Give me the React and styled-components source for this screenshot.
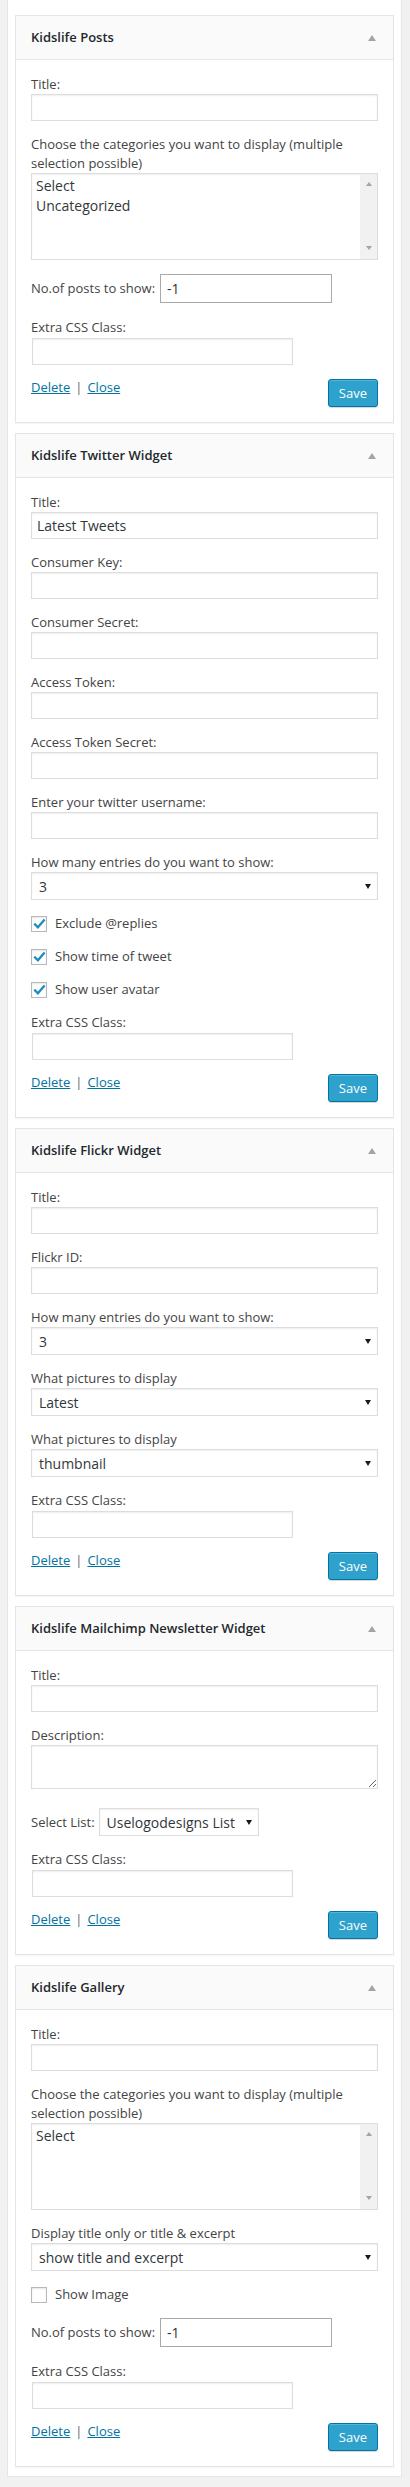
import React from "react";
import styled, { createGlobalStyle } from "styled-components";

const GlobalStyle = createGlobalStyle`
  html, body { margin: 0; padding: 0; background: #f1f1f1; }
  body {
    font-family: "Open Sans", "Liberation Sans", sans-serif;
    font-size: 13px;
    color: #444;
    line-height: 1.4;
  }
  *, *::before, *::after { box-sizing: border-box; }
`;

const Panel = styled.div`
  margin: 0 8px 9px 7px;
  background: #fff;
  border: 1px solid #e5e5e5;
  border-top: none;
  padding: 15px 7px 9px;
  display: flex;
  flex-direction: column;
  gap: 10px;
`;

const Widget = styled.section`
  background: #fff;
  border: 1px solid #e5e5e5;
  box-shadow: 0 1px 1px rgba(0, 0, 0, 0.04);
`;

const WidgetTop = styled.header`
  height: 44px;
  background: #fafafa;
  border-bottom: 1px solid #e5e5e5;
  display: flex;
  align-items: center;
  justify-content: space-between;
  padding: 0 12px 0 15px;
`;

const WidgetTitle = styled.h3`
  margin: 0;
  font-size: 13px;
  font-weight: 600;
  line-height: 1;
  color: #23282d;
  white-space: nowrap;
`;

const ToggleIcon = styled.svg`
  display: block;
  width: 20px;
  height: 20px;
  fill: #a0a5aa;
`;

const WidgetBody = styled.div`
  padding: 15px;
`;

const Field = styled.div`
  margin-bottom: ${(p) => (p.$mb != null ? p.$mb : 14)}px;
`;

const Label = styled.label`
  display: block;
  line-height: 19px;
  color: #444;
`;

const InlineLabel = styled.label`
  line-height: 19px;
  color: #444;
  white-space: nowrap;
`;

const TextInput = styled.input`
  display: block;
  width: ${(p) => p.$w || "100%"};
  height: 27px;
  margin: ${(p) => (p.$shift ? "1px 0 0 1px" : "0")};
  padding: 0 5px;
  border: 1px solid #ddd;
  border-radius: 0;
  box-shadow: inset 0 1px 2px rgba(0, 0, 0, 0.07);
  background: #fff;
  font-family: "Open Sans", "Liberation Sans", sans-serif;
  font-size: 14px;
  color: #32373c;
  outline: none;
`;

const NumberInput = styled.input`
  display: block;
  width: 172px;
  height: 29px;
  margin: 0;
  padding: 0 6px;
  border: 1px solid #a9a9a9;
  border-radius: 0;
  background: #fff;
  font-family: "Open Sans", "Liberation Sans", sans-serif;
  font-size: 14px;
  color: #333;
  outline: none;
`;

const TextArea = styled.textarea`
  display: block;
  width: 100%;
  height: 44px;
  margin: 0;
  padding: 2px 6px;
  border: 1px solid #ddd;
  border-radius: 0;
  box-shadow: inset 0 1px 2px rgba(0, 0, 0, 0.07);
  background: #fff;
  font-family: "Open Sans", "Liberation Sans", sans-serif;
  font-size: 14px;
  color: #32373c;
  resize: vertical;
  outline: none;
`;

const ListBox = styled.div`
  display: flex;
  height: 87px;
  border: 1px solid #ddd;
  box-shadow: inset 0 1px 2px rgba(0, 0, 0, 0.07);
  background: #fff;
`;

const OptionList = styled.ul`
  flex: 1;
  margin: 0;
  padding: 2px 4px;
  list-style: none;
  font-size: 14px;
  line-height: 20px;
  color: #32373c;
`;

const Scrollbar = styled.div`
  width: 17px;
  background: #f1f1f1;
  display: flex;
  flex-direction: column;
  justify-content: space-between;
  align-items: center;
  padding: 8px 0 9px;
`;

const ScrollArrow = styled.span`
  width: 0;
  height: 0;
  border-left: 3.5px solid transparent;
  border-right: 3.5px solid transparent;
  ${(p) =>
    p.$down
      ? "border-top: 4px solid #a3a3a3;"
      : "border-bottom: 4px solid #a3a3a3;"}
`;

const SelectWrap = styled.div`
  position: relative;
  width: ${(p) => p.$w || "100%"};
  &::after {
    content: "";
    position: absolute;
    right: 7px;
    top: 50%;
    margin-top: -2.5px;
    border-left: 3.5px solid transparent;
    border-right: 3.5px solid transparent;
    border-top: 5px solid #1a1a1a;
    pointer-events: none;
  }
`;

const Select = styled.select`
  appearance: none;
  -webkit-appearance: none;
  display: block;
  width: 100%;
  height: 28px;
  margin: 0;
  padding: 0 22px 0 7px;
  border: 1px solid #ddd;
  border-radius: 0;
  box-shadow: inset 0 1px 2px rgba(0, 0, 0, 0.07);
  background: #fff;
  font-family: "Open Sans", "Liberation Sans", sans-serif;
  font-size: 14px;
  color: #32373c;
  outline: none;
`;

const InlineRow = styled.div`
  display: flex;
  align-items: center;
  gap: ${(p) => p.$gap || 5}px;
  margin-bottom: ${(p) => (p.$mb != null ? p.$mb : 14)}px;
`;

const CheckRow = styled.label`
  display: flex;
  align-items: center;
  gap: 8px;
  height: 19px;
  line-height: 19px;
  margin-bottom: 14px;
  color: #444;
`;

const CheckBox = styled.span`
  display: block;
  flex: none;
  width: 16px;
  height: 16px;
  border: 1px solid #b4b9be;
  background: #fff;
  box-shadow: inset 0 1px 2px rgba(0, 0, 0, 0.1);
`;

const CheckMark = styled.svg`
  display: block;
  width: 14px;
  height: 14px;
`;

const Actions = styled.div`
  display: flex;
  justify-content: space-between;
  align-items: flex-start;
`;

const LinkGroup = styled.div`
  line-height: 17px;
`;

const ActionLink = styled.a`
  color: #0074a2;
  text-decoration: underline;
  cursor: pointer;
`;

const Sep = styled.span`
  padding: 0 5px;
  color: #666;
`;

const SaveButton = styled.button`
  height: 28px;
  margin: 0;
  padding: 0 10px;
  border: 1px solid #0074a2;
  border-radius: 3px;
  background: #2ea2cc;
  box-shadow: inset 0 1px 0 rgba(120, 200, 230, 0.5),
    0 1px 0 rgba(0, 0, 0, 0.15);
  color: #fff;
  font-family: "Open Sans", "Liberation Sans", sans-serif;
  font-size: 13px;
  line-height: 26px;
  cursor: pointer;
`;

function WidgetCard({ title, children }) {
  return (
    <Widget>
      <WidgetTop>
        <WidgetTitle>{title}</WidgetTitle>
        <ToggleIcon viewBox="0 0 20 20" aria-hidden="true">
          <path d="M7 13l4-6 4 6H7z" />
        </ToggleIcon>
      </WidgetTop>
      <WidgetBody>
        {children}
        <Actions>
          <LinkGroup>
            <ActionLink>Delete</ActionLink>
            <Sep>|</Sep>
            <ActionLink>Close</ActionLink>
          </LinkGroup>
          <SaveButton type="button">Save</SaveButton>
        </Actions>
      </WidgetBody>
    </Widget>
  );
}

function TextField({ label, value = "" }) {
  return (
    <Field>
      <Label>{label}</Label>
      <TextInput type="text" defaultValue={value} />
    </Field>
  );
}

function SelectField({ label, value }) {
  return (
    <Field>
      <Label>{label}</Label>
      <SelectWrap>
        <Select defaultValue={value}>
          <option value={value}>{value}</option>
        </Select>
      </SelectWrap>
    </Field>
  );
}

function ExtraClassField() {
  return (
    <Field>
      <Label>Extra CSS Class:</Label>
      <TextInput type="text" $w="261px" $shift />
    </Field>
  );
}

function CategoryField({ options }) {
  return (
    <Field>
      <Label>Choose the categories you want to display (multiple selection possible)</Label>
      <ListBox>
        <OptionList>
          {options.map((o) => (
            <li key={o}>{o}</li>
          ))}
        </OptionList>
        <Scrollbar>
          <ScrollArrow />
          <ScrollArrow $down />
        </Scrollbar>
      </ListBox>
    </Field>
  );
}

function PostsCountRow({ mb }) {
  return (
    <InlineRow $mb={mb}>
      <InlineLabel>No.of posts to show:</InlineLabel>
      <NumberInput type="text" defaultValue="-1" />
    </InlineRow>
  );
}

function Check({ label, checked }) {
  return (
    <CheckRow>
      <CheckBox>
        {checked && (
          <CheckMark viewBox="0 0 14 14" aria-hidden="true">
            <path
              d="M2.3 6.6 L5.9 10.2 L12.6 2.4"
              fill="none"
              stroke="#1e8cbe"
              strokeWidth="2.3"
            />
          </CheckMark>
        )}
      </CheckBox>
      <span>{label}</span>
    </CheckRow>
  );
}

export default function App() {
  return (
    <>
      <GlobalStyle />
      <Panel>
        <WidgetCard title="Kidslife Posts">
          <TextField label="Title:" />
          <CategoryField options={["Select", "Uncategorized"]} />
          <PostsCountRow mb={15} />
          <ExtraClassField />
        </WidgetCard>

        <WidgetCard title="Kidslife Twitter Widget">
          <TextField label="Title:" value="Latest Tweets" />
          <TextField label="Consumer Key:" />
          <TextField label="Consumer Secret:" />
          <TextField label="Access Token:" />
          <TextField label="Access Token Secret:" />
          <TextField label="Enter your twitter username:" />
          <SelectField label="How many entries do you want to show:" value="3" />
          <Check label="Exclude @replies" checked />
          <Check label="Show time of tweet" checked />
          <Check label="Show user avatar" checked />
          <ExtraClassField />
        </WidgetCard>

        <WidgetCard title="Kidslife Flickr Widget">
          <TextField label="Title:" />
          <TextField label="Flickr ID:" />
          <SelectField label="How many entries do you want to show:" value="3" />
          <SelectField label="What pictures to display" value="Latest" />
          <SelectField label="What pictures to display" value="thumbnail" />
          <ExtraClassField />
        </WidgetCard>

        <WidgetCard title="Kidslife Mailchimp Newsletter Widget">
          <TextField label="Title:" />
          <Field $mb={19}>
            <Label>Description:</Label>
            <TextArea />
          </Field>
          <InlineRow $gap={4}>
            <InlineLabel>Select List:</InlineLabel>
            <SelectWrap $w="160px">
              <Select defaultValue="uselogo">
                <option value="uselogo">Uselogodesigns List</option>
              </Select>
            </SelectWrap>
          </InlineRow>
          <ExtraClassField />
        </WidgetCard>

        <WidgetCard title="Kidslife Gallery">
          <TextField label="Title:" />
          <CategoryField options={["Select"]} />
          <SelectField label="Display title only or title & excerpt" value="show title and excerpt" />
          <Check label="Show Image" />
          <PostsCountRow mb={15} />
          <ExtraClassField />
        </WidgetCard>
      </Panel>
    </>
  );
}
